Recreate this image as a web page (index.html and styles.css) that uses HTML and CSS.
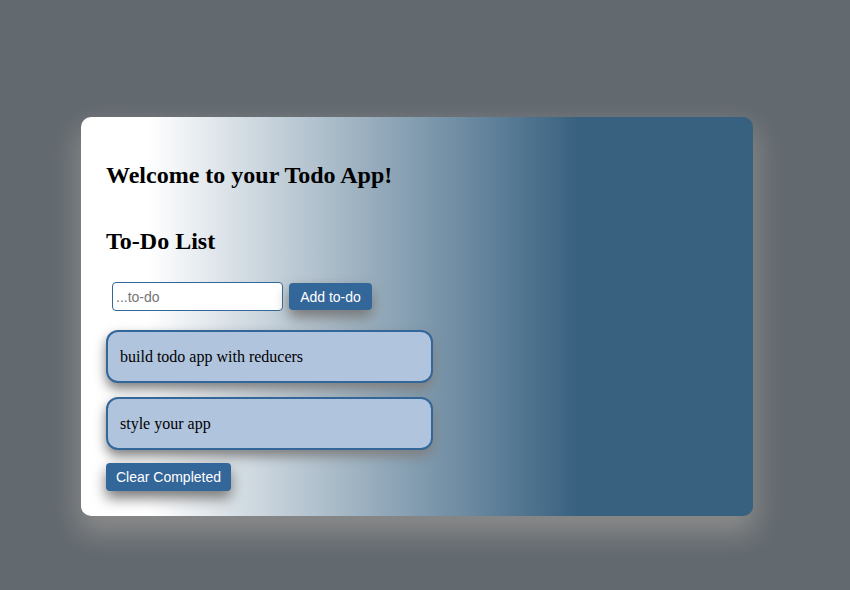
FILE: index.html
```html
<!DOCTYPE html>
<html>
<head>
<meta charset="utf-8">
<title>Todo App</title>
<link rel="stylesheet" href="styles.css">
</head>
<body>
<div class="app">
  <div class="card">
    <h2 class="welcome">Welcome to your Todo App!</h2>
    <h2 class="list-title">To-Do List</h2>
    <form class="add-form">
      <input class="todo-input" type="text" placeholder="...to-do">
      <button class="btn" type="button">Add to-do</button>
    </form>
    <div class="todo-list">
      <div class="todo-item">build todo app with reducers</div>
      <div class="todo-item">style your app</div>
    </div>
    <div class="footer">
      <button class="btn clear" type="button">Clear Completed</button>
    </div>
  </div>
</div>
</body>
</html>
```
FILE: styles.css
```css
html, body {
  margin: 0;
  padding: 0;
}
body {
  background: #62696f;
  font-family: "Liberation Serif", "Times New Roman", serif;
  width: 850px;
  height: 590px;
  overflow: hidden;
}
.app {
  padding: 117px 0 0 81px;
}
.card {
  width: 672px;
  height: 399px;
  box-sizing: border-box;
  padding: 25px;
  border-radius: 10px;
  background: linear-gradient(to right, #ffffff 10%, #386180 74%);
  box-shadow: 0 14px 28px 4px #8a8a8a;
  display: flex;
  flex-direction: column;
  align-items: flex-start;
}
h2 {
  font-size: 24px;
  line-height: 28px;
  font-weight: bold;
  margin: 0;
  color: #000;
}
.welcome {
  margin-top: 19px;
}
.list-title {
  margin-top: 38px;
}
.add-form {
  margin-top: 27px;
  padding-left: 6px;
  display: flex;
  align-items: center;
  gap: 6px;
  height: 29px;
}
.todo-input {
  width: 171px;
  height: 29px;
  box-sizing: border-box;
  border: 1px solid #336699;
  border-radius: 4px;
  padding: 0 3px;
  font-family: "Liberation Sans", Arial, sans-serif;
  font-size: 14px;
  background: #fff;
  outline: none;
}
.todo-input::placeholder {
  color: #757575;
}
.btn {
  background: #336699;
  color: #fff;
  border: none;
  border-radius: 4px;
  font-family: "Liberation Sans", Arial, sans-serif;
  font-size: 14px;
  height: 27px;
  width: 83px;
  padding: 0;
  box-shadow: 0 7px 14px #777;
  cursor: pointer;
}
.todo-list {
  margin-top: 19px;
  display: flex;
  flex-direction: column;
  gap: 14px;
}
.todo-item {
  width: 327px;
  box-sizing: border-box;
  border: 2px solid #336699;
  border-radius: 12px;
  background: #b0c4de;
  padding: 16px 12px;
  font-size: 16px;
  line-height: 17px;
  color: #000;
  box-shadow: 0 6px 12px #7f7f7f;
}
.footer {
  margin-top: 13px;
}
.btn.clear {
  height: 28px;
  width: 125px;
}
```
